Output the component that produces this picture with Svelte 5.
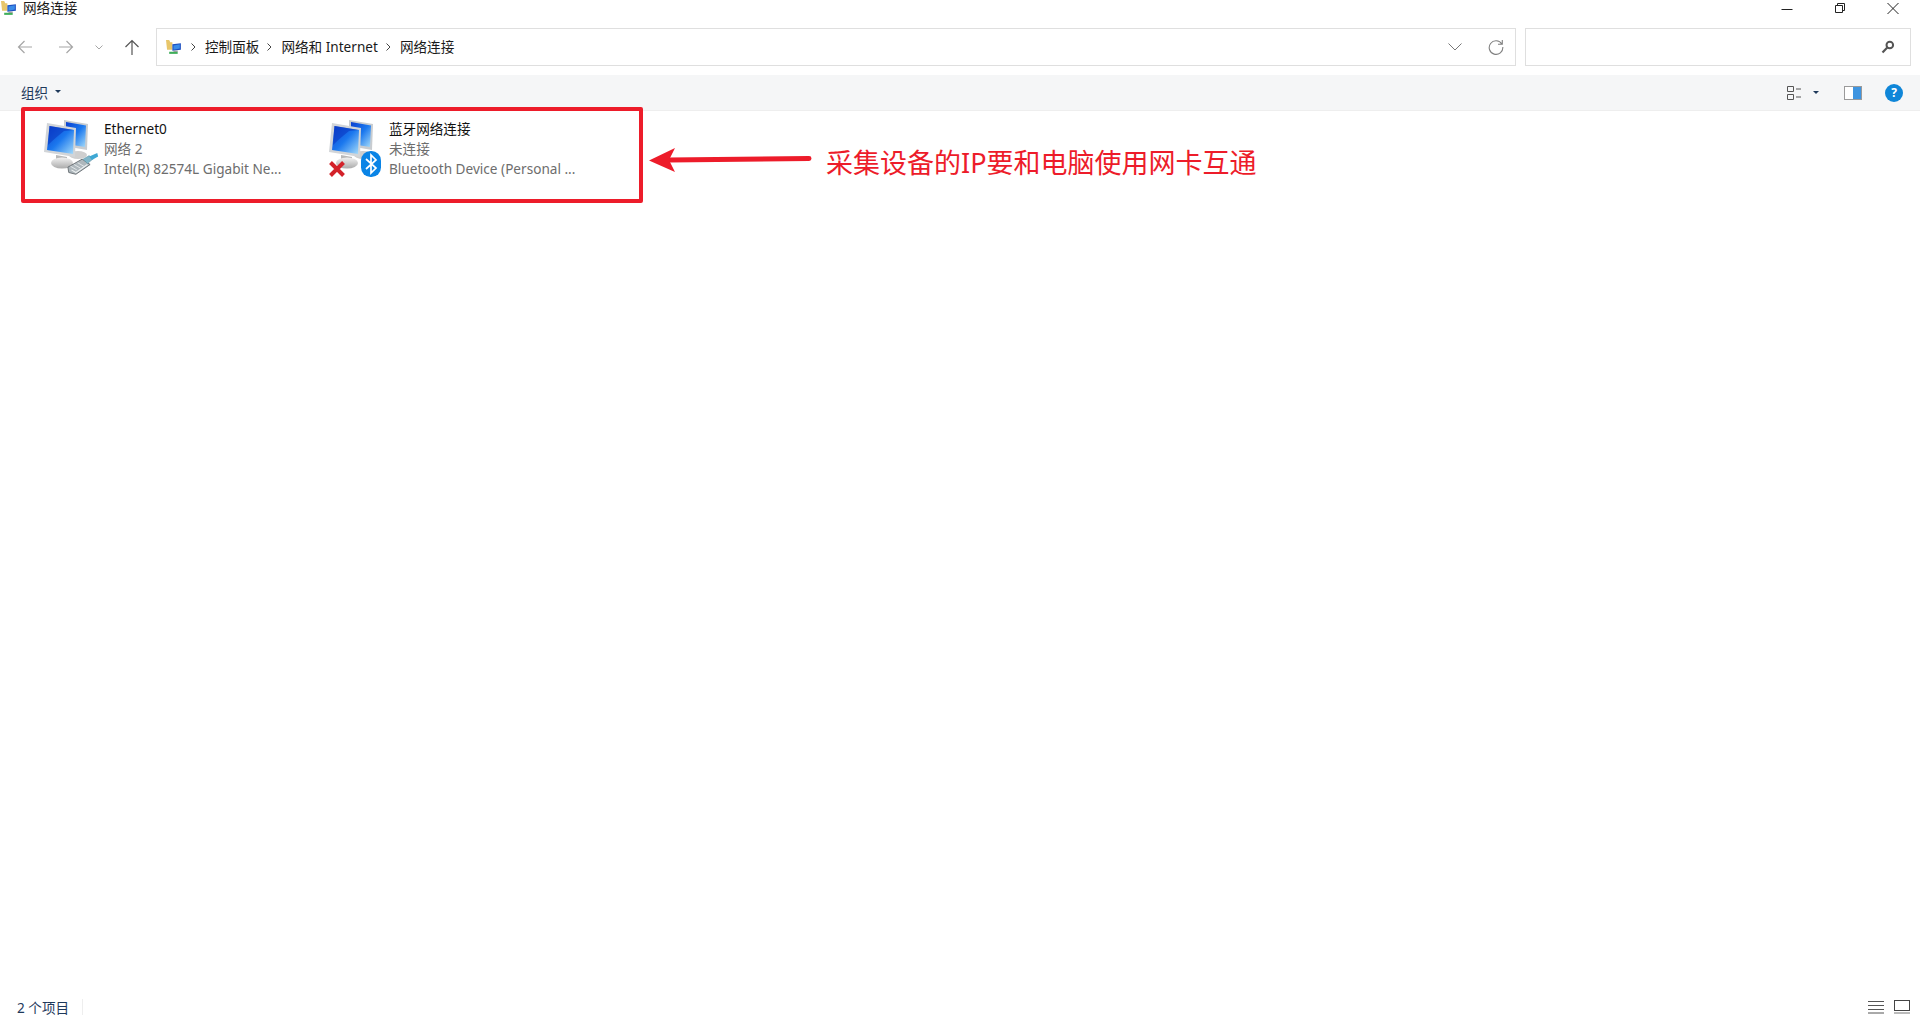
<script>
	const crumbs = ['控制面板', '网络和 Internet', '网络连接'];
</script>

{#snippet monitors()}
	<svg class="pc" viewBox="0 0 54 56" width="54" height="56">
		<defs>
			<linearGradient id="scr" x1="0" y1="0" x2="1" y2="1">
				<stop offset="0" stop-color="#0a3fd0" />
				<stop offset="0.5" stop-color="#1b78ee" />
				<stop offset="1" stop-color="#a6dcfa" />
			</linearGradient>
			<linearGradient id="base" x1="0" y1="0" x2="0" y2="1">
				<stop offset="0" stop-color="#f2f2f2" />
				<stop offset="1" stop-color="#ababab" />
			</linearGradient>
		</defs>
		<!-- back monitor -->
		<path d="M20 1 L44 5 L43 31 L20 27 Z" fill="#c8ccd0" />
		<path d="M22 3 L42 6.5 L41 28 L22 25 Z" fill="url(#scr)" />
		<ellipse cx="34" cy="36" rx="9" ry="4" fill="#cfcfcf" />
		<!-- front monitor -->
		<path d="M3 4 L32 9 L31 38 L0 33 Z" fill="#d2d5d8" />
		<path d="M5.5 7 L30 11 L29 35 L3 31 Z" fill="url(#scr)" />
		<path d="M5.5 7 L30 11 L20 12 Q10 20 4 26 Z" fill="#0a35c0" opacity="0.55" />
		<path d="M12 36 L23 38 L23 42 L12 40 Z" fill="#b8b8b8" />
		<ellipse cx="18" cy="44" rx="11" ry="5.5" fill="url(#base)" />
	</svg>
{/snippet}

{#snippet smallIcon()}
	<svg viewBox="0 0 16 16" width="17" height="17">
		<path d="M0 1 L3 1 L4 3 L6 3 L6 10 L1 10 Z" fill="#e8c66a" />
		<path d="M6 5 L14 4 L14 10 L6 11 Z" fill="#1d4fc0" />
		<path d="M7 6 L13 5 L13 9 L7 10 Z" fill="#3a8be8" />
		<path d="M3 12 L11 12 L11 14 L3 14 Z" fill="#3fae5a" />
		<path d="M7 11 L11 11 L11 12 L7 12 Z" fill="#888" />
	</svg>
{/snippet}

<div class="window">
	<div class="titlebar">
		<span class="title-icon">{@render smallIcon()}</span>
		<span class="title-text">网络连接</span>
		<div class="winbtns">
			<svg width="12" height="12" viewBox="0 0 12 12"><path d="M0.5 7.5H11.5" stroke="#222" fill="none" /></svg>
			<svg width="12" height="12" viewBox="0 0 12 12"><path d="M1.5 3.5H8.5V10.5H1.5Z M3.5 3.5V1.5H10.5V8.5H8.5" stroke="#222" fill="none" /></svg>
			<svg width="12" height="12" viewBox="0 0 12 12"><path d="M0.5 1L11.5 12M11.5 1L0.5 12" stroke="#222" fill="none" /></svg>
		</div>
	</div>

	<div class="navbar">
		<div class="navbtns">
			<svg width="16" height="14" viewBox="0 0 16 14"><path d="M15 7H2M7.5 1L1.5 7L7.5 13" stroke="#a6a6a6" stroke-width="1.2" fill="none" /></svg>
			<svg width="16" height="14" viewBox="0 0 16 14"><path d="M1 7H14M8.5 1L14.5 7L8.5 13" stroke="#a6a6a6" stroke-width="1.2" fill="none" /></svg>
			<svg class="navdown" width="8" height="5" viewBox="0 0 8 5"><path d="M0.5 0.5L4 4L7.5 0.5" stroke="#a6a6a6" fill="none" /></svg>
			<svg class="navup" width="16" height="16" viewBox="0 0 16 16"><path d="M8 16V2M1.5 8L8 1.5L14.5 8" stroke="#555" stroke-width="1.2" fill="none" /></svg>
		</div>
		<div class="address">
			<span class="addr-icon">{@render smallIcon()}</span>
			{#each crumbs as c}
				<svg class="sep" width="5" height="8" viewBox="0 0 5 8"><path d="M0.5 0.5L4 4L0.5 7.5" stroke="#444" fill="none" /></svg>
				<span class="crumb">{c}</span>
			{/each}
			<div class="addr-right">
				<svg width="14" height="8" viewBox="0 0 14 8"><path d="M0.5 0.5L7 7L13.5 0.5" stroke="#777" fill="none" /></svg>
				<svg width="16" height="16" viewBox="0 0 16 16"><path d="M13.8 5A6.8 6.8 0 1 0 14.8 8M14.3 1V5.3H10" stroke="#808080" stroke-width="1.1" fill="none" /></svg>
			</div>
		</div>
		<div class="search">
			<svg width="14" height="14" viewBox="0 0 14 14"><circle cx="8.8" cy="5" r="3.3" stroke="#555" stroke-width="2" fill="none" /><path d="M6.3 7.6L1.5 12.5" stroke="#555" stroke-width="2.2" /></svg>
		</div>
	</div>

	<div class="toolbar">
		<span class="organize">组织</span>
		<span class="caret"></span>
		<div class="tools">
			<svg width="16" height="14" viewBox="0 0 16 14"><path d="M0.5 0.5H6.5V5.5H0.5ZM0.5 8.5H6.5V13.5H0.5Z" stroke="#555" fill="none" /><path d="M9 3H14M9 11H14" stroke="#555" /></svg>
			<span class="caret dark"></span>
			<svg class="pane" width="18" height="14" viewBox="0 0 18 14"><rect x="0.5" y="0.5" width="17" height="13" fill="#fff" stroke="#9a9a9a" /><rect x="9" y="1" width="8" height="12" fill="#3f95e0" /></svg>
			<span class="help">?</span>
		</div>
	</div>

	<div class="items">
		<div class="item">
			<div class="icon">
				{@render monitors()}
				<svg class="badge plug" width="32" height="25" viewBox="0 0 36 28">
					<!-- RJ45 connector -->
					<path d="M1 17 L17 8 L26 14 L10 25 L2 23 Z" fill="#aeb7bc" stroke="#62696e" stroke-width="1" />
					<path d="M4 16 L11 20 M8 14 L15 18 M12 12 L19 16" stroke="#e2e6e8" stroke-width="1.1" />
					<path d="M5 20 L10 23 L23 14" stroke="#eef1f2" stroke-width="1.2" fill="none" />
					<path d="M18 8 L25 4 L29 8 L23 13 Z" fill="#7fb6c9" stroke="#5b8fa3" stroke-width="0.6" />
					<path d="M25 5 L34 1 L35 5 L28 9 Z" fill="#3ea8d4" />
				</svg>
			</div>
			<div class="text">
				<div class="name">Ethernet0</div>
				<div class="sub">网络 2</div>
				<div class="sub">Intel(R) 82574L Gigabit Ne...</div>
			</div>
		</div>
		<div class="item">
			<div class="icon">
				{@render monitors()}
				<svg class="badge cross" width="18" height="18" viewBox="0 0 18 18"><path d="M2.5 2.5L15.5 15.5M15.5 2.5L2.5 15.5" stroke="#d3222a" stroke-width="4" /></svg>
				<svg class="badge bt" width="20" height="26" viewBox="0 0 20 26">
					<rect x="0" y="0" width="20" height="26" rx="9.5" fill="#0a84e6" />
					<path d="M5 8L15 17L10 22V4L15 9L5 18" stroke="#fff" stroke-width="1.7" fill="none" />
				</svg>
			</div>
			<div class="text">
				<div class="name">蓝牙网络连接</div>
				<div class="sub">未连接</div>
				<div class="sub">Bluetooth Device (Personal ...</div>
			</div>
		</div>
	</div>

	<div class="status">
		<span class="count">2 个项目</span>
		<span class="status-sep"></span>
		<div class="views">
			<svg width="16" height="14" viewBox="0 0 16 14"><path d="M0 1.5H16M0 5.5H16M0 9.5H16M0 13H16" stroke="#555" /></svg>
			<svg width="16" height="14" viewBox="0 0 16 14"><rect x="0.5" y="0.5" width="15" height="10" fill="none" stroke="#444" /><path d="M0 13H16" stroke="#777" /></svg>
		</div>
	</div>

	<!-- annotation drawn over the screenshot -->
	<div class="mark"></div>
	<svg class="arrow" width="166" height="26" viewBox="0 0 166 26">
		<path d="M160 11.5 L20 13" stroke="#ed1c2a" stroke-width="5" stroke-linecap="round" />
		<path d="M0 13.5 L26 1 L20 13 L26 25 Z" fill="#ed1c2a" />
	</svg>
	<div class="note">采集设备的IP要和电脑使用网卡互通</div>
</div>

<style>
	:global(body) {
		margin: 0;
		background: #fff;
	}

	.window {
		position: relative;
		height: 100vh;
		display: flex;
		flex-direction: column;
		overflow: hidden;
		font-family: "Noto Sans", "Noto Sans CJK SC", sans-serif;
		font-size: 13.6px;
		color: #1a1a1a;
	}

	.titlebar {
		height: 28px;
		display: flex;
		align-items: flex-start;
		flex-shrink: 0;
	}

	.title-icon {
		margin: 0 5px 0 1px;
		height: 17px;
	}

	.title-text {
		line-height: 16px;
	}

	.winbtns {
		margin-left: auto;
		display: flex;
		gap: 41px;
		padding: 2px 21px 0 0;
	}

	.navbar {
		height: 47px;
		display: flex;
		align-items: flex-start;
		flex-shrink: 0;
	}

	.navbtns {
		width: 156px;
		height: 38px;
		display: flex;
		align-items: center;
		padding-left: 17px;
		box-sizing: border-box;
		gap: 25px;
	}

	.navdown {
		margin-left: -4px;
	}

	.navup {
		margin-left: -4px;
	}

	.address {
		width: 1360px;
		height: 38px;
		box-sizing: border-box;
		border: 1px solid #dfdfdf;
		display: flex;
		align-items: center;
		padding-left: 9px;
		margin-right: 9px;
	}

	.addr-icon {
		height: 17px;
	}

	.sep {
		margin: 0 9px 0 8px;
	}

	.crumb {
		white-space: nowrap;
		line-height: 36px;
		height: 36px;
		margin-top: -1px;
	}

	.addr-right {
		margin-left: auto;
		display: flex;
		align-items: center;
		gap: 26px;
		padding-right: 11px;
	}

	.search {
		width: 386px;
		height: 38px;
		box-sizing: border-box;
		border: 1px solid #dfdfdf;
		display: flex;
		align-items: center;
		justify-content: flex-end;
		padding-right: 15px;
	}

	.toolbar {
		height: 36px;
		display: flex;
		align-items: center;
		background: #f5f6f7;
		border-bottom: 1px solid #eeeeee;
		box-sizing: border-box;
		padding: 0 0 2px 21px;
		flex-shrink: 0;
	}

	.organize {
		color: #1e395b;
	}

	.caret {
		width: 0;
		height: 0;
		margin-left: 7px;
		border-left: 3px solid transparent;
		border-right: 3px solid transparent;
		border-top: 3px solid #1e395b;
	}

	.tools {
		margin-left: auto;
		display: flex;
		align-items: center;
		padding: 2px 17px 0 0;
	}

	.tools .caret {
		margin: 0 0 0 10px;
	}

	.pane {
		margin: 0 23px 0 25px;
	}

	.help {
		width: 18px;
		height: 18px;
		border-radius: 50%;
		background: #0f86d8;
		color: #fff;
		font-size: 12px;
		font-weight: 700;
		line-height: 18px;
		text-align: center;
	}

	.items {
		flex: 1;
		display: flex;
		padding: 8px 0 0 44px;
	}

	.item {
		width: 285px;
		display: flex;
	}

	.icon {
		position: relative;
		width: 60px;
		height: 60px;
		flex-shrink: 0;
	}

	.badge {
		position: absolute;
	}

	.plug {
		left: 23px;
		top: 33px;
	}

	.cross {
		left: -1px;
		top: 41px;
	}

	.bt {
		left: 32px;
		top: 32px;
	}

	.text {
		line-height: 20px;
		white-space: nowrap;
	}

	.name {
		color: #111;
	}

	.sub {
		color: #6d6d6d;
	}

	.status {
		height: 37px;
		display: flex;
		align-items: center;
		padding: 0 0 3px 17px;
		box-sizing: border-box;
		flex-shrink: 0;
	}

	.count {
		color: #1e395b;
	}

	.status-sep {
		width: 1px;
		height: 16px;
		margin-left: 13px;
		background: #eeeeee;
	}

	.views {
		margin-left: auto;
		display: flex;
		gap: 10px;
		padding-right: 10px;
	}

	.mark {
		position: absolute;
		left: 21px;
		top: 107px;
		width: 622px;
		height: 96px;
		box-sizing: border-box;
		border: 4px solid #ed1c2a;
		border-radius: 2px;
	}

	.arrow {
		position: absolute;
		left: 649px;
		top: 147px;
	}

	.note {
		position: absolute;
		left: 826px;
		top: 144px;
		font-size: 27px;
		line-height: 38px;
		color: #ed1c2a;
		white-space: nowrap;
	}
</style>
